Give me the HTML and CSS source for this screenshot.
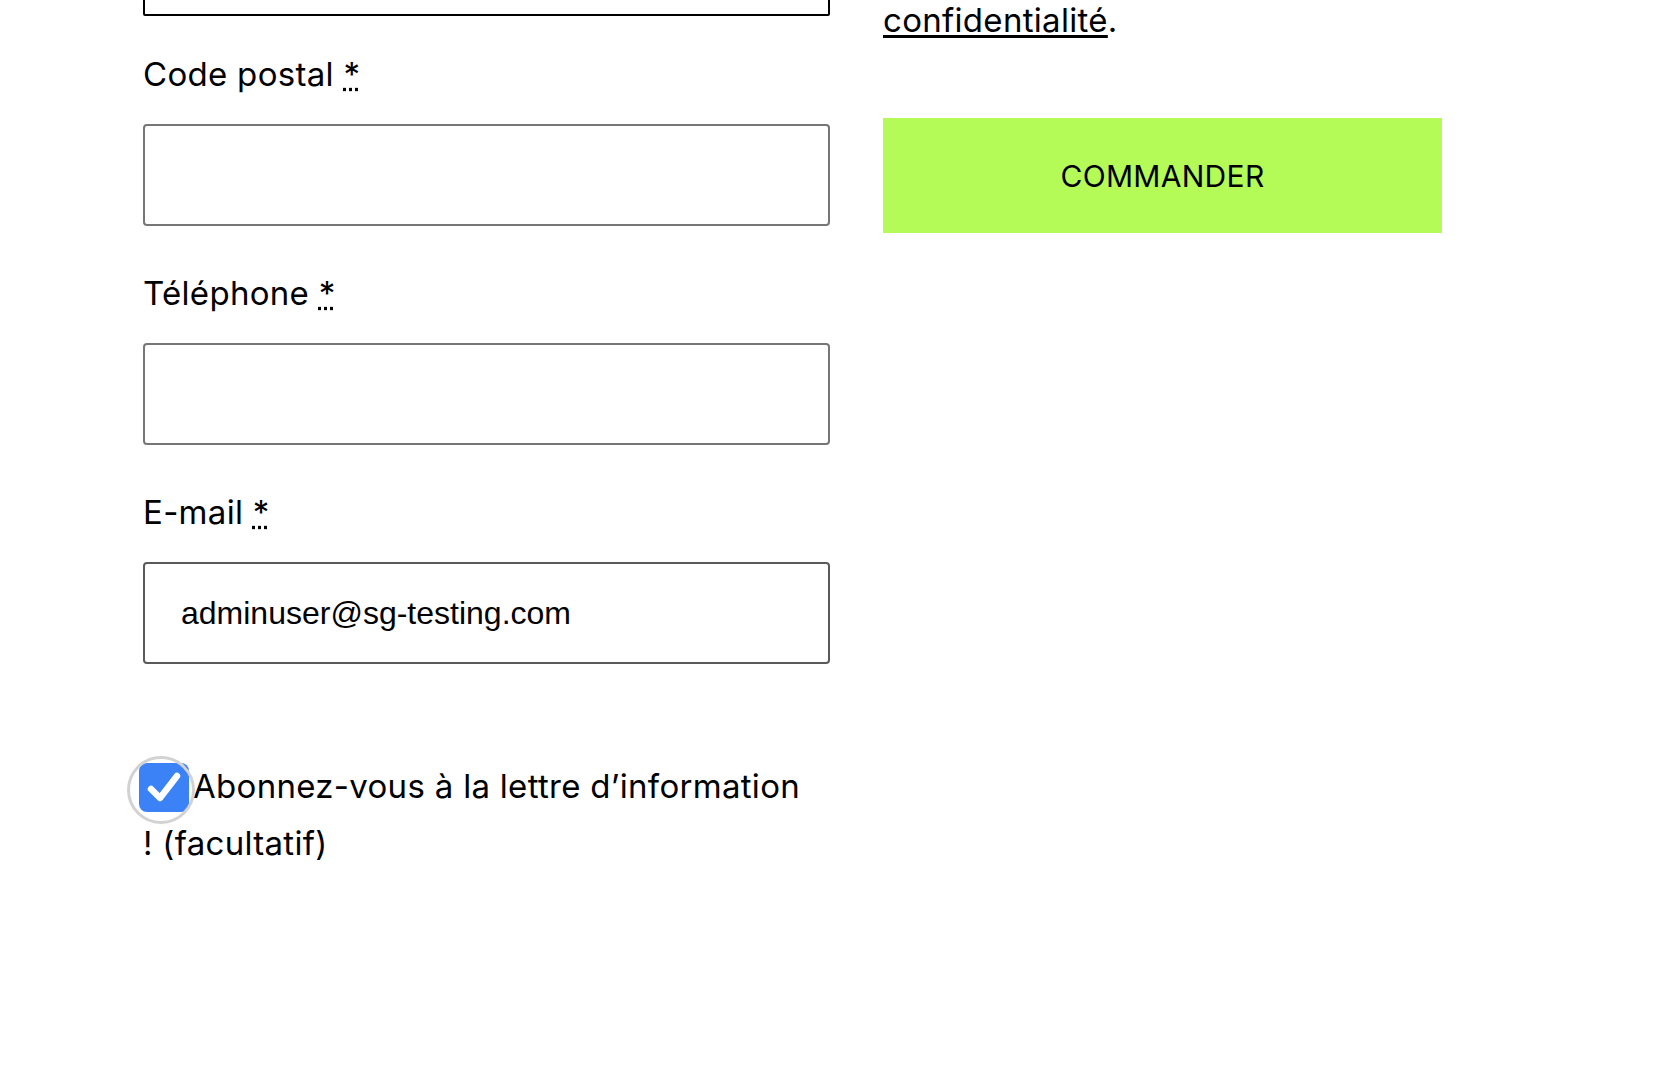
FILE: index.html
```html
<!DOCTYPE html>
<html lang="fr">
<head>
    <meta charset="UTF-8">
    <meta name="viewport" content="width=device-width, initial-scale=1.0">
    <title>Commande</title>
    <link rel="stylesheet" href="styles.css">
</head>
<body>
<form class="checkout" action="#" method="post">
    <div class="col-billing">
        <p class="field field-first">
            <input type="text" class="input input-focus" name="billing_city">
        </p>
        <p class="field">
            <label for="billing_postcode">Code postal <abbr class="required" title="obligatoire">*</abbr></label>
            <input type="text" class="input" id="billing_postcode" name="billing_postcode">
        </p>
        <p class="field">
            <label for="billing_phone">Téléphone <abbr class="required" title="obligatoire">*</abbr></label>
            <input type="tel" class="input" id="billing_phone" name="billing_phone">
        </p>
        <p class="field">
            <label for="billing_email">E-mail <abbr class="required" title="obligatoire">*</abbr></label>
            <input type="email" class="input input-filled" id="billing_email" name="billing_email" value="adminuser@sg-testing.com">
        </p>
        <p class="newsletter">
            <label for="newsletter">
                <input type="checkbox" id="newsletter" name="newsletter" checked>
                <span class="check">
                    <svg viewBox="0 0 50 49" width="50" height="49"><path d="M12 26 L21 35 L38 13" fill="none" stroke="#fff" stroke-width="6.5" stroke-linecap="round" stroke-linejoin="round"/></svg>
                </span>Abonnez-vous à la lettre d’information ! (facultatif)
            </label>
        </p>
    </div>
    <div class="col-review">
        <div class="privacy-box">
            <p class="privacy">Vos données personnelles seront utilisées pour le traitement de votre commande, et pour d’autres raisons décrites dans notre <a href="#">politique de<br>confidentialité</a>.</p>
        </div>
        <button type="submit" class="order-button">COMMANDER</button>
    </div>
</form>
</body>
</html>
```

FILE: styles.css
```css
body {
    margin: 0;
    background: #fff;
    color: #000;
    font-family: Inter, Roboto, "Noto Sans", Arial, sans-serif;
    letter-spacing: 0.3px;
}
.checkout {
    display: grid;
    grid-template-columns: 687px 559px;
    column-gap: 53px;
    align-items: start;
    padding-left: 143px;
    margin-top: -86px;
}
.field {
    margin: 0 0 45px;
}
.field-first {
    margin-bottom: 36px;
}
.field label {
    display: block;
    font-size: 33px;
    line-height: 45px;
    margin-bottom: 27px;
}
.required {
    text-decoration: underline dotted;
    cursor: help;
}
.input {
    display: block;
    box-sizing: border-box;
    width: 100%;
    height: 102px;
    margin: 0;
    padding: 0 36px;
    border: 2px solid #767676;
    border-radius: 4px;
    background: #fff;
    font-family: "Liberation Sans", Arial, sans-serif;
    font-size: 32px;
    letter-spacing: 0;
    color: #000;
}
.input-focus {
    border-color: #000;
    border-radius: 2px;
}
.input-filled {
    border-color: #5a5a5a;
}
.newsletter {
    margin: 94px 0 0;
    padding-right: 24px;
    font-size: 33px;
    line-height: 57px;
}
.newsletter input {
    position: absolute;
    opacity: 0;
    width: 0;
    height: 0;
}
.check {
    position: relative;
    display: inline-block;
    width: 50px;
    height: 49px;
    margin-left: -4px;
    margin-right: 4px;
    vertical-align: -14px;
    border-radius: 8px;
    background: #3b82f6;
}
.check::before {
    content: "";
    position: absolute;
    left: -12px;
    top: -7px;
    box-sizing: border-box;
    width: 68px;
    height: 68px;
    border: 3.5px solid #d2d2d2;
    border-radius: 50%;
}
.check svg {
    position: relative;
    display: block;
}
.privacy-box {
    display: flex;
    flex-direction: column;
    justify-content: flex-end;
    height: 136px;
    overflow: hidden;
}
.privacy {
    margin: 0;
    font-size: 33px;
    line-height: 57.6px;
}
.privacy a {
    color: #000;
    text-decoration-thickness: 2.5px;
    text-underline-offset: 3px;
}
.order-button {
    display: block;
    width: 100%;
    height: 115px;
    margin-top: 68px;
    border: none;
    border-radius: 0;
    background: #b5fb58;
    color: #000;
    font-family: Inter, Roboto, "Noto Sans", Arial, sans-serif;
    font-size: 30px;
    letter-spacing: 0.3px;
    cursor: pointer;
}
```
